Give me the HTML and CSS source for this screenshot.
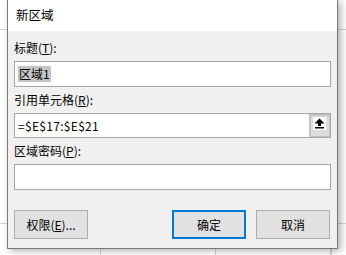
FILE: index.html
```html
<!DOCTYPE html>
<html lang="zh-CN">
<head>
    <meta charset="UTF-8">
    <meta name="viewport" content="width=device-width, initial-scale=1.0">
    <title>新区域</title>
    <link rel="stylesheet" href="styles.css">
</head>
<body>
    <div class="dialog">
        <div class="titlebar">新区域</div>
        <div class="content">
            <div class="field">
                <div class="label">标题(<u>T</u>):</div>
                <div class="input"><span class="selected">区域1</span></div>
            </div>
            <div class="field">
                <div class="label">引用单元格(<u>R</u>):</div>
                <div class="input ref">
                    <span class="value">=$E$17:$E$21</span>
                    <div class="collapse">
                        <div class="icon">
                            <svg width="13" height="13" viewBox="0 0 13 13">
                                <polygon points="1.5,6.5 6.5,1.5 11.5,6.5" fill="#000"/>
                                <rect x="5" y="6" width="3" height="3" fill="#000"/>
                                <rect x="2" y="10" width="9" height="1.5" fill="#000"/>
                            </svg>
                        </div>
                    </div>
                </div>
            </div>
            <div class="field">
                <div class="label">区域密码(<u>P</u>):</div>
                <div class="input"></div>
            </div>
            <div class="buttons">
                <button class="btn">权限(<u>E</u>)...</button>
                <div class="spacer"></div>
                <button class="btn primary">确定</button>
                <button class="btn">取消</button>
            </div>
        </div>
    </div>
</body>
</html>
```

FILE: styles.css
```css
body {
    margin: 0;
    height: 255px;
    overflow: hidden;
    font-family: "Noto Sans CJK SC", "Noto Sans", sans-serif;
    font-size: 12px;
    color: #000;
    background-color: #fff;
    background-image:
        linear-gradient(#d4d4d4, #d4d4d4),
        linear-gradient(#d4d4d4, #d4d4d4),
        linear-gradient(#d4d4d4, #d4d4d4),
        linear-gradient(#d4d4d4, #d4d4d4),
        linear-gradient(#d4d4d4, #d4d4d4),
        linear-gradient(#d4d4d4, #d4d4d4);
    background-size: 100% 1px, 100% 1px, 1px 100%, 1px 100%, 1px 100%, 1px 100%;
    background-position: 0 29px, 0 223px, 100px 0, 215px 0, 330px 0, 331px 0;
    background-repeat: no-repeat;
}
.dialog {
    width: 329px;
    margin-left: 7px;
    border: 1px solid #7a7a7a;
    border-top: none;
    background: #f0f0f0;
    box-shadow: 3px 2px 7px rgba(0, 0, 0, 0.3);
}
.titlebar {
    height: 31px;
    line-height: 30px;
    padding-left: 8px;
    background: #fff;
    font-size: 12.5px;
}
.content {
    padding: 9px 6px 9px 6px;
}
.field {
    margin-bottom: 5px;
}
.label {
    height: 16px;
    line-height: 16px;
    margin-bottom: 5px;
}
u {
    text-decoration-thickness: 1px;
    text-underline-offset: 1px;
}
.input {
    box-sizing: border-box;
    height: 26px;
    border: 1px solid #a6a6a6;
    background: #fff;
    padding-left: 3px;
    line-height: 24px;
    display: flex;
    align-items: center;
}
.selected {
    background: #c4c4c4;
    line-height: 16px;
    padding: 0 1px;
}
.ref {
    height: 25px;
}
.value {
    flex: 1;
    letter-spacing: 0.3px;
}
.collapse {
    align-self: stretch;
    box-sizing: border-box;
    width: 21px;
    border: 2px solid #c4c4c4;
    border-right-width: 1px;
    border-bottom-width: 1px;
    background: #dcdcdc;
    padding: 1px 0 0 2px;
}
.icon {
    width: 13px;
    height: 13px;
    background: #fff;
}
.icon svg {
    display: block;
}
.buttons {
    display: flex;
    gap: 10px;
    margin-top: 20px;
    padding-right: 1px;
}
.spacer {
    flex: 1;
}
.btn {
    box-sizing: border-box;
    width: 74px;
    height: 29px;
    padding: 0;
    font-family: inherit;
    font-size: 12px;
    color: #000;
    background: #e1e1e1;
    border: 1px solid #adadad;
}
.primary {
    border: 2px solid #0078d7;
}
```
